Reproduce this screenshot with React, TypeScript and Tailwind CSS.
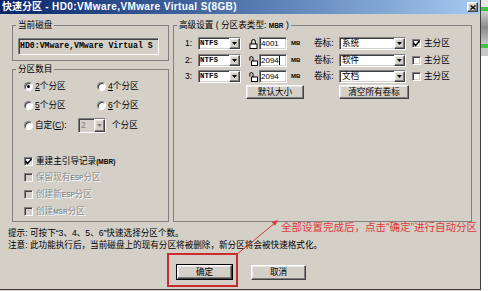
import React from 'react';

const sunken =
  'border border-t-[#808080] border-l-[#808080] border-b-white border-r-white shadow-[inset_1px_1px_0_#404040,inset_-1px_-1px_0_#d4d0c8]';
const raised =
  'border border-t-white border-l-white border-b-[#404040] border-r-[#404040] shadow-[inset_-1px_-1px_0_#808080,inset_1px_1px_0_#e8e8e8]';

function Sm({ children }: { children: React.ReactNode }) {
  return <span className="text-[6.5px] font-bold">{children}</span>;
}

function GroupBox({ title, className, children }: { title: React.ReactNode; className?: string; children: React.ReactNode }) {
  return (
    <fieldset className={`border border-[#808080] min-w-0 ${className ?? ''}`}>
      <legend className="ml-[3px] px-[2px] h-[11px] leading-[11px]">{title}</legend>
      {children}
    </fieldset>
  );
}

function Arrow({ disabled }: { disabled?: boolean }) {
  return (
    <svg width="5" height="3" viewBox="0 0 5 3">
      <polygon points="0,0 5,0 2.5,3" fill={disabled ? '#808080' : '#000'} />
    </svg>
  );
}

function DropBtn({ disabled }: { disabled?: boolean }) {
  return (
    <div className={`${raised} w-[11px] h-full flex items-center justify-center bg-[#d4d0c8]`}>
      <Arrow disabled={disabled} />
    </div>
  );
}

function Radio({ checked }: { checked?: boolean }) {
  return (
    <div className="w-[9px] h-[9px] rounded-full bg-white border border-t-[#808080] border-l-[#808080] border-b-white border-r-white shadow-[inset_1px_1px_0_#404040] flex items-center justify-center">
      {checked && <div className="w-[3px] h-[3px] rounded-full bg-black" />}
    </div>
  );
}

function Check({ checked, disabled }: { checked?: boolean; disabled?: boolean }) {
  return (
    <div className={`${sunken} w-[9px] h-[9px] flex items-center justify-center ${disabled ? 'bg-[#d4d0c8]' : 'bg-white'}`}>
      {checked && (
        <svg width="7" height="7" viewBox="0 0 7 7">
          <polyline points="0.5,3 2.5,5.5 6.5,1" fill="none" stroke="#000" strokeWidth="1.6" />
        </svg>
      )}
    </div>
  );
}

function CheckRow({ checked, disabled, className, children }: { checked?: boolean; disabled?: boolean; className?: string; children: React.ReactNode }) {
  return (
    <div className={`flex items-center h-[12px] ${className ?? ''}`}>
      <Check checked={checked} disabled={disabled} />
      <span className={`ml-[3px] whitespace-nowrap ${disabled ? 'text-[#8c8c8c] [text-shadow:1px_1px_0_#fff]' : ''}`}>{children}</span>
    </div>
  );
}

function Btn({ className, children }: { className?: string; children: React.ReactNode }) {
  return (
    <div className={`${raised} bg-[#d4d0c8] flex items-center justify-center whitespace-nowrap ${className ?? ''}`}>
      {children}
    </div>
  );
}

function Lock({ open }: { open?: boolean }) {
  return (
    <svg width="9" height="10" viewBox="0 0 9 10">
      {open ? (
        <>
          <path d="M0.8 4.5 V2.2 a1.6 1.6 0 0 1 3.2 0 V5" fill="none" stroke="#000" strokeWidth="1" />
          <rect x="2.5" y="5" width="6" height="4.5" fill="#fff" stroke="#000" strokeWidth="1" />
        </>
      ) : (
        <>
          <path d="M2.6 5 V2.4 a1.9 1.9 0 0 1 3.8 0 V5" fill="none" stroke="#000" strokeWidth="1" />
          <rect x="1" y="5" width="7" height="4.5" fill="#fff" stroke="#000" strokeWidth="1" />
        </>
      )}
    </svg>
  );
}

function PartRow({ n, size, label, primary, open, caret, className }: {
  n: string; size: string; label: string; primary?: boolean; open?: boolean; caret?: boolean; className?: string;
}) {
  return (
    <div className={`flex items-center h-[13px] ${className ?? ''}`}>
      <span className="w-[13px]">{n}:</span>
      <div className={`${sunken} w-[43px] h-full bg-white flex items-center`}>
        <span className="flex-1 pl-[1px] font-['Liberation_Mono',monospace] font-bold text-[7.5px] leading-none">NTFS</span>
        <DropBtn />
      </div>
      <div className="ml-[8px] w-[9px] flex items-center">
        <Lock open={open} />
      </div>
      <div className={`${sunken} ml-[1px] w-[28px] h-full bg-white flex items-center pl-[1px] text-[8px] leading-none`}>
        {size}
        {caret && <span className="w-px h-[9px] bg-black" />}
      </div>
      <span className="ml-[4px] w-[10px] text-[6px] font-bold">MB</span>
      <span className="ml-[13px] w-[25px]">卷标:</span>
      <div className={`${sunken} w-[67px] h-full bg-white flex items-center`}>
        <span className="flex-1 pl-[2px] leading-none">{label}</span>
        <DropBtn />
      </div>
      <div className="ml-[6px]">
        <Check checked={primary} />
      </div>
      <span className="ml-[3px]">主分区</span>
    </div>
  );
}

export default function App() {
  return (
    <div className="w-[488px] h-[291px] flex bg-[#d4d0c8] overflow-hidden font-['Liberation_Sans','Noto_Sans_CJK_SC',sans-serif] text-[8.6px] leading-[11px] text-black">
      <div className="relative w-[481px] h-[290px] flex flex-col border-r border-b border-r-[#404040] border-b-[#404040]">
        {/* Title bar */}
        <div className="h-[14px] flex items-center justify-between px-[2px] bg-linear-to-r from-[#0a246a] to-[#a6caf0]">
          <span className="text-white font-bold text-[10px] leading-none whitespace-nowrap">
            快速分区<span className="text-[10px] tracking-[0.4px]"> - HD0:VMware,VMware Virtual S(8GB)</span>
          </span>
          <div className={`${raised} w-[11px] h-[10px] bg-[#d4d0c8] flex items-center justify-center`}>
            <svg width="6" height="5" viewBox="0 0 6 5">
              <path d="M0.5 0.5 L5.5 4.5 M5.5 0.5 L0.5 4.5" stroke="#000" strokeWidth="1.3" />
            </svg>
          </div>
        </div>

        {/* Body */}
        <div className="flex pl-[12px] pt-[6px] gap-[4px]">
          <div className="w-[157px] flex flex-col gap-[3px]">
            <GroupBox title="当前磁盘">
              <div className="pt-[7px] pb-[5px] pl-[5px]">
                <div className={`${sunken} w-[141px] h-[17px] flex items-center pl-[1px] overflow-hidden whitespace-nowrap font-['Liberation_Mono',monospace] font-bold text-[8.2px] leading-none`}>
                  HD0:VMware,VMware Virtual S
                </div>
              </div>
            </GroupBox>

            <GroupBox title="分区数目">
              <div className="pt-[5px] pl-[11px] pb-[4px]">
                <div className="grid grid-cols-[73px_1fr] h-[12px] items-center">
                  <div className="flex items-center">
                    <Radio checked />
                    <span className="ml-[2px]"><u>2</u>个分区</span>
                  </div>
                  <div className="flex items-center">
                    <Radio />
                    <span className="ml-[2px]"><u>4</u>个分区</span>
                  </div>
                </div>
                <div className="grid grid-cols-[73px_1fr] h-[12px] items-center mt-[7px]">
                  <div className="flex items-center">
                    <Radio />
                    <span className="ml-[2px]"><u>5</u>个分区</span>
                  </div>
                  <div className="flex items-center">
                    <Radio />
                    <span className="ml-[2px]"><u>6</u>个分区</span>
                  </div>
                </div>
                <div className="flex items-center h-[15px] mt-[7px]">
                  <Radio />
                  <span className="ml-[2px] w-[43px]">自定(<u>C</u>):</span>
                  <div className={`${sunken} w-[28px] h-full flex items-center bg-[#d4d0c8]`}>
                    <span className="flex-1 pl-[2px] text-[#808080]">2</span>
                    <DropBtn disabled />
                  </div>
                  <span className="ml-[6px]">个分区</span>
                </div>
                <CheckRow checked className="mt-[22px]">重建主引导记录<Sm>(MBR)</Sm></CheckRow>
                <CheckRow disabled className="mt-[4px]">保留现有<Sm>ESP</Sm>分区</CheckRow>
                <CheckRow disabled className="mt-[5px]">创建新<Sm>ESP</Sm>分区</CheckRow>
                <CheckRow disabled className="mt-[5px]">创建<Sm>MSR</Sm>分区</CheckRow>
              </div>
            </GroupBox>
          </div>

          <GroupBox title={<>高级设置 ( 分区表类型: <Sm>MBR</Sm> )</>} className="w-[299px]">
            <div className="pl-[11px]">
              <PartRow n="1" size="4001" label="系统" primary className="mt-[6px]" />
              <PartRow n="2" size="2094" label="软件" open caret className="mt-[4px]" />
              <PartRow n="3" size="2094" label="文档" open className="mt-[3px]" />
              <div className="flex mt-[2px]">
                <Btn className="ml-[61px] w-[58px] h-[14px]">默认大小</Btn>
                <Btn className="ml-[35px] w-[70px] h-[14px]">清空所有卷标</Btn>
              </div>
            </div>
          </GroupBox>
        </div>

        {/* Hints */}
        <div className="pl-[8px] mt-[6px] whitespace-nowrap">
          <div className="h-[11px]">提示: 可按下“3、4、5、6”快速选择分区个数。</div>
          <div className="h-[11px] mt-[1px]">注意: 此功能执行后，当前磁盘上的现有分区将被删除，新分区将会被快速格式化。</div>
        </div>

        {/* Buttons */}
        <div className="flex items-start mt-[2px] pl-[167px] gap-[13px]">
          <div className="border-2 border-[#cc2b2e] pt-[10px] pb-[6px] pl-[8px] pr-[4px]">
            <Btn className="w-[55px] h-[14px] outline outline-black">确定</Btn>
          </div>
          <Btn className="w-[55px] h-[15px] mt-[12px]">取消</Btn>
        </div>

        {/* Annotation overlay */}
        <div className="absolute left-[281px] top-[221px] text-[10.5px] leading-[12px] text-[#e0383a] whitespace-nowrap">
          全部设置完成后，点击“确定”进行自动分区
        </div>
        <svg className="absolute left-[230px] top-[215px]" width="55" height="45" viewBox="0 0 55 45">
          <line x1="6" y1="40" x2="45" y2="8" stroke="#d8363a" strokeWidth="1" />
          <polygon points="48,5 45,10.7 41.8,6.9" fill="#d8363a" />
        </svg>
      </div>

      {/* Neighbouring window edge */}
      <div className="flex-1 flex flex-col bg-[#f4f4f4]">
        <div className="h-[7px] bg-[#e8e8e8]" />
        <div className="h-[4px] bg-[#3cc83c]" />
        <div className="h-[33px] bg-linear-to-b from-[#d0d0d0] via-[#8a8a8a] to-[#c8c8c8]" />
        <div className="h-[4px] bg-[#3cc83c]" />
        <div className="h-[8px] bg-[#c8c8c8]" />
        <div className="flex-1 bg-white" />
      </div>
    </div>
  );
}
